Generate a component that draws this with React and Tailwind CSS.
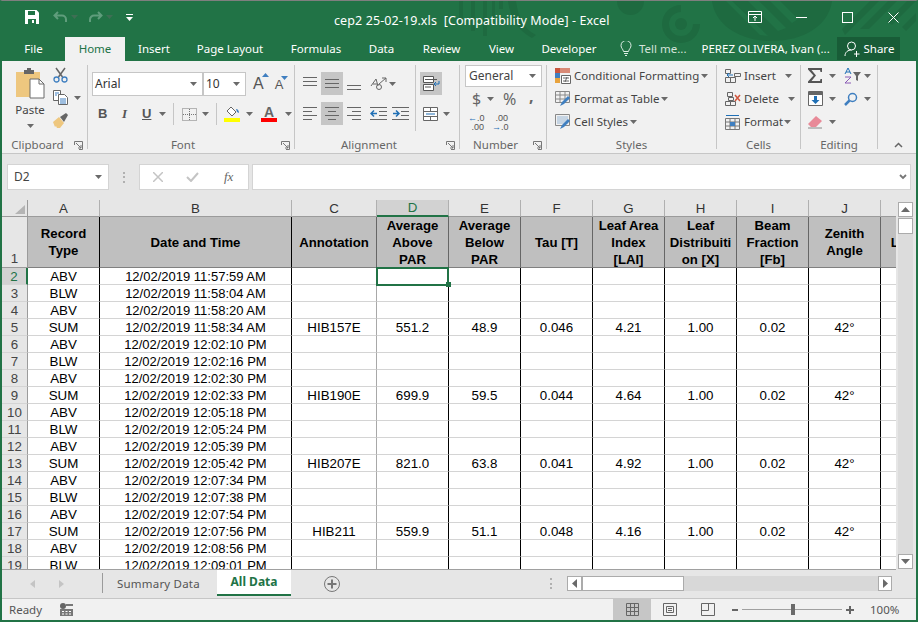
import React from 'react';

const rows = [
  ['ABV', '11:57:59 AM'],
  ['BLW', '11:58:04 AM'],
  ['ABV', '11:58:20 AM'],
  ['SUM', '11:58:34 AM', 'HIB157E', '551.2', '48.9', '0.046', '4.21'],
  ['ABV', '12:02:10 PM'],
  ['BLW', '12:02:16 PM'],
  ['ABV', '12:02:30 PM'],
  ['SUM', '12:02:33 PM', 'HIB190E', '699.9', '59.5', '0.044', '4.64'],
  ['ABV', '12:05:18 PM'],
  ['BLW', '12:05:24 PM'],
  ['ABV', '12:05:39 PM'],
  ['SUM', '12:05:42 PM', 'HIB207E', '821.0', '63.8', '0.041', '4.92'],
  ['ABV', '12:07:34 PM'],
  ['BLW', '12:07:38 PM'],
  ['ABV', '12:07:54 PM'],
  ['SUM', '12:07:56 PM', 'HIB211', '559.9', '51.1', '0.048', '4.16'],
  ['ABV', '12:08:56 PM'],
  ['BLW', '12:09:01 PM'],
];

const columns = ['A', 'B', 'C', 'D', 'E', 'F', 'G', 'H', 'I', 'J', 'K'];

const headers = [
  'Record\nType',
  'Date and Time',
  'Annotation',
  'Average\nAbove\nPAR',
  'Average\nBelow\nPAR',
  'Tau [T]',
  'Leaf Area\nIndex\n[LAI]',
  'Leaf\nDistribuiti\non [X]',
  'Beam\nFraction\n[Fb]',
  'Zenith\nAngle',
  'Latitude',
];

const Caret = ({ className = '' }) => (
  <svg width="7" height="4" viewBox="0 0 7 4" className={`shrink-0 ${className}`}>
    <path d="M0 0h7L3.5 4z" fill="#6a6a6a" />
  </svg>
);

const Launcher = () => (
  <svg width="9" height="9" viewBox="0 0 9 9" fill="none" stroke="#777" className="shrink-0">
    <path d="M.5 4V.5h8v8H5" />
    <path d="M2 2l5 5M7 4v3H4" />
  </svg>
);

const Lines = ({ widths, y = 0, gap = 4 }) => (
  <svg width="15" height="15" viewBox="0 0 15 15" stroke="#666" className="shrink-0">
    {widths.map((w, i) => (
      <path key={i} d={`M${w[0]} ${y + 0.5 + i * gap}H${w[1]}`} />
    ))}
  </svg>
);

const WindowPattern = () => (
  <svg className="absolute left-0 top-0 pointer-events-none" width="918" height="50" viewBox="0 0 918 50" fill="#1e6a40">
    <path d="M457 0h4v22h-4zM469 0h4v30h-4zM481 0h4v35h-4zM490 0h3v18h-3zM497 0h4v8h-4z" />
    <path d="M506 0h8c2 16 8 28 20 34l-4 3C516 30 508 16 506 0z" />
    <path d="M615 0h27c0 8-6 14-13.500 14S615 8 615 0z" />
    <path d="M679 4a19 19 0 1 0 19 19h-7a12 12 0 1 1-12-12z" />
    <circle cx="679" cy="23" r="6" />
    <path d="M710 0h120c-3 24-28 40-60 40S713 24 710 0zM724 0l34 34 8 1-36-35zM746 0l30 30 8-3-27-27zM768 0l22 22 6-4-18-18z" fillRule="evenodd" />
    <path d="M840 28L868 0h9l-34 34zM858 28l28-28h9l-28 28zM885 20L905 0h9l-24 24zM900 26l16-16v8l-12 12z" />
  </svg>
);

const TitleBar = () => (
  <div className="flex h-[36px] items-center pb-[4px] text-white">
    <svg width="16" height="16" viewBox="0 0 16 16" className="ml-[22px] shrink-0">
      <path d="M1 1h11.500L15 3.500V15H1z" fill="#fff" />
      <path d="M4 2h7v4H4z" fill="#217346" />
      <path d="M4 10h8v5H4z" fill="#217346" />
      <path d="M8 11h2v3H8z" fill="#fff" />
    </svg>
    <svg width="15" height="12" viewBox="0 0 15 12" fill="none" stroke="#5f9d7c" strokeWidth="2" className="ml-[13px] shrink-0">
      <path d="M5 1L1.500 4.500 5 8M2 4.500h7a4 4 0 0 1 4 4V11" />
    </svg>
    <Caret className="ml-[3px] opacity-40" />
    <svg width="15" height="12" viewBox="0 0 15 12" fill="none" stroke="#5f9d7c" strokeWidth="2" className="ml-[10px] shrink-0">
      <path d="M10 1l3.500 3.500L10 8M13 4.500H6a4 4 0 0 0-4 4V11" />
    </svg>
    <Caret className="ml-[3px] opacity-40" />
    <svg width="7" height="7" viewBox="0 0 7 7" className="ml-[13px] shrink-0" fill="#fff">
      <path d="M0 0h7v1H0zM0 3h7L3.500 7z" />
    </svg>
    <span className="ml-[201px] mt-[8px] w-[296px] whitespace-pre text-[12.500px] tracking-[0.1px]">cep2 25-02-19.xls  [Compatibility Mode] - Excel</span>
    <svg width="14" height="12" viewBox="0 0 14 12" fill="none" stroke="#fff" className="ml-[118px] shrink-0">
      <path d="M.5.500h13v11H.500zM.500 3.500h13M7 10V5M5 7l2-2 2 2" />
    </svg>
    <div className="ml-[34px] h-[1px] w-[11px] bg-white" />
    <div className="ml-[35px] h-[11px] w-[11px] border border-white" />
    <svg width="11" height="11" viewBox="0 0 11 11" stroke="#fff" className="ml-[35px] shrink-0">
      <path d="M.5.500l10 10M10.500.500l-10 10" />
    </svg>
  </div>
);

const tabs = [
  ['File', 'w-[63px]'],
  ['Home', 'w-[60px]'],
  ['Insert', 'w-[58px]'],
  ['Page Layout', 'w-[94px]'],
  ['Formulas', 'w-[78px]'],
  ['Data', 'w-[53px]'],
  ['Review', 'w-[67px]'],
  ['View', 'w-[53px]'],
  ['Developer', 'w-[82px]'],
];

const TabBar = () => (
  <div className="relative flex h-[24px] items-stretch text-[11.500px] text-white">
    {tabs.map(([name, w]) => (
      <div
        key={name}
        className={`${w} flex items-center justify-center ${name === 'Home' ? 'bg-[#f1f1f1] text-[#217346]' : ''}`}
      >
        {name}
      </div>
    ))}
    <svg width="12" height="15" viewBox="0 0 12 15" fill="none" stroke="#dfeee6" className="ml-[10px] mt-[4px] shrink-0">
      <path d="M3.500 10.500C3 8 1 7 1 4.500a5 5 0 0 1 10 0C11 7 9 8 8.500 10.500zM4 12.500h4M5 14.500h2" />
    </svg>
    <span className="ml-[7px] flex items-center text-[#d3e3da]">Tell me...</span>
    <span className="ml-[15px] flex w-[136px] items-center whitespace-nowrap">PEREZ OLIVERA, Ivan (...</span>
    <div className="flex h-[23px] w-[63px] items-center bg-[#185c37] pl-[7px]">
      <svg width="16" height="16" viewBox="0 0 16 16" fill="none" stroke="#fff" className="shrink-0">
        <circle cx="7.500" cy="5" r="4" />
        <path d="M1 15c0-4 3-6 6.500-6M10 13h5.500M12.500 10v6" />
      </svg>
      <span className="ml-[3px]">Share</span>
    </div>
  </div>
);

const RibbonGroup = ({ width, label, launcher, labelClass = '', children }) => (
  <div className={`${width} relative flex h-[84px] shrink-0 flex-col border-r border-[#c6c6c6]`}>
    <div className="-mt-[4px] h-[76px] shrink-0">{children}</div>
    <div className="mt-[4px] flex h-[8px] items-center justify-center text-[11.500px] text-[#666]">
      <span className={labelClass}>{label}</span>
    </div>
    {launcher && (
      <div className="absolute -bottom-[1px] right-[4px]">
        <Launcher />
      </div>
    )}
  </div>
);

const ClipboardGroup = () => (
  <RibbonGroup width="w-[86px]" label="Clipboard" launcher labelClass="mr-[14px]">
    <div className="flex pl-[12px] pt-[6px]">
      <div className="flex w-[32px] flex-col items-center">
        <svg width="30" height="32" viewBox="0 0 30 32" className="shrink-0">
          <path d="M1 5h24v25H1z" fill="#eec77f" />
          <path d="M9 3h3V1h4v2h3v4H9z" fill="#666" />
          <path d="M15 12h9l5 5v14H15z" fill="#fff" stroke="#6a6a6a" />
          <path d="M24 12v5h5" fill="none" stroke="#6a6a6a" />
        </svg>
        <span className="mt-[3px] text-[11.500px] leading-[16px] text-[#444]">Paste</span>
        <Caret className="mt-[6px]" />
      </div>
      <div className="ml-[7px] flex flex-col">
        <svg width="15" height="16" viewBox="0 0 15 16" fill="none" className="shrink-0">
          <path d="M3 1l6.500 9M12 1L5.500 10" stroke="#666" strokeWidth="1.500" />
          <circle cx="3.500" cy="12.500" r="2.500" stroke="#3f7fc0" strokeWidth="1.300" />
          <circle cx="11.500" cy="12.500" r="2.500" stroke="#3f7fc0" strokeWidth="1.300" />
        </svg>
        <div className="mt-[7px] flex items-center">
          <svg width="15" height="15" viewBox="0 0 15 15" fill="#fff" stroke="#666" className="shrink-0">
            <path d="M.5.500h7v10h-7z" />
            <path d="M5.500 4.500h6l3 3v7h-9z" />
            <path d="M2 3h4M2 5h2M7 9h6M7 11h6M7 13h6" stroke="#3f7fc0" />
          </svg>
          <Caret className="ml-[6px]" />
        </div>
        <svg width="16" height="16" viewBox="0 0 16 16" className="mt-[7px] shrink-0">
          <path d="M0 10l6-5 5 6-4 5H4l-1-2-1 1z" fill="#eec77f" />
          <path d="M7 5l6-4 2 2-4 7z" fill="#666" />
        </svg>
      </div>
    </div>
  </RibbonGroup>
);

const Combo = ({ width, text }) => (
  <div className={`${width} flex h-[24px] items-center justify-between border border-[#c6c6c6] bg-white pl-[2px] pr-[5px] font-['Noto_Sans',sans-serif] text-[12px] text-[#333]`}>
    <span>{text}</span>
    <Caret />
  </div>
);

const BigA = ({ size, up, className }) => (
  <span className={`relative flex items-center justify-center font-['Liberation_Sans',sans-serif] text-[#555] ${size} ${className}`}>
    A
    <svg width="7" height="4" viewBox="0 0 7 4" className="absolute -right-[5px] top-[1px]">
      <path d={up ? 'M0 4h7L3.500 0z' : 'M0 0h7L3.500 4z'} fill="#3f7fc0" />
    </svg>
  </span>
);

const FontGroup = () => (
  <RibbonGroup width="w-[207px]" label="Font" launcher labelClass="mr-[16px]">
    <div className="flex items-center pl-[4px] pt-[11px]">
      <Combo width="w-[111px]" text="Arial" />
      <Combo width="w-[43px]" text="10" />
      <BigA size="text-[16px]" up className="ml-[7px]" />
      <BigA size="text-[13px]" className="ml-[11px] mt-[2px]" />
    </div>
    <div className="mt-[7px] flex h-[22px] items-center pl-[10px] font-['Liberation_Sans',sans-serif] text-[13px] text-[#555]">
      <span className="w-[8px] font-bold">B</span>
      <span className="ml-[16px] w-[6px] font-['Liberation_Serif',serif] font-bold italic">I</span>
      <span className="ml-[14px] w-[9px] font-bold underline">U</span>
      <Caret className="ml-[8px]" />
      <div className="ml-[7px] h-[22px] w-[1px] bg-[#c6c6c6]" />
      <svg width="15" height="13" viewBox="0 0 15 13" fill="none" stroke="#777" strokeDasharray="1 1" className="ml-[8px] shrink-0">
        <path d="M.5.500h14v12H.500zM7.500 1v11M1 6.500h13" />
      </svg>
      <Caret className="ml-[5px]" />
      <div className="ml-[7px] h-[22px] w-[1px] bg-[#c6c6c6]" />
      <div className="ml-[7px] flex w-[16px] flex-col items-center">
        <svg width="15" height="12" viewBox="0 0 15 12" className="shrink-0">
          <path d="M6 1l5 5-4 4-5-5z" fill="#fff" stroke="#666" />
          <path d="M11 3c2 0 3 2 3 4l-2-1z" fill="#3f7fc0" />
        </svg>
        <div className="h-[4px] w-[16px] bg-[#ffff00]" />
      </div>
      <Caret className="ml-[6px]" />
      <div className="ml-[8px] flex w-[16px] flex-col items-center">
        <span className="h-[12px] text-[14px] font-bold leading-[13px] text-[#666]">A</span>
        <div className="h-[4px] w-[16px] bg-[#ff0000]" />
      </div>
      <Caret className="ml-[8px]" />
    </div>
  </RibbonGroup>
);

const AlignButton = ({ active, children, className = '' }) => (
  <div className={`flex h-[23px] w-[22px] shrink-0 items-center justify-center ${active ? 'bg-[#c6c6c6]' : ''} ${className}`}>
    {children}
  </div>
);

const full = [[0, 14], [0, 14], [0, 14]];

const AlignmentGroup = () => (
  <RibbonGroup width="w-[165px]" label="Alignment" launcher labelClass="mr-[16px]">
    <div className="flex h-full">
      <div className="mt-[4px] mb-[6px] w-[121px] border-r border-[#c6c6c6] pl-[4px] pt-[7px]">
        <div className="flex items-center">
          <AlignButton><Lines widths={full} y={1} /></AlignButton>
          <AlignButton active><Lines widths={full} y={3} /></AlignButton>
          <AlignButton><Lines widths={full.slice(0, 2)} y={9} /></AlignButton>
          <svg width="17" height="16" viewBox="0 0 17 16" fill="none" stroke="#666" className="ml-[5px] shrink-0">
            <path d="M1 10l5-7 2 7M3 8h4" />
            <circle cx="9" cy="11" r="2.500" />
            <path d="M9 8l7-6M16 2h-4M16 2v4" />
          </svg>
          <Caret className="ml-[2px]" />
        </div>
        <div className="mt-[7px] flex items-center">
          <AlignButton><Lines widths={[[0, 14], [0, 9], [0, 14], [0, 9]]} y={1} /></AlignButton>
          <AlignButton active><Lines widths={[[0, 14], [3, 11], [0, 14], [3, 11]]} y={1} /></AlignButton>
          <AlignButton><Lines widths={[[0, 14], [5, 14], [0, 14], [5, 14]]} y={1} /></AlignButton>
          <svg width="17" height="14" viewBox="0 0 17 14" fill="none" stroke="#666" className="ml-[5px] shrink-0">
            <path d="M0 .5h17M9 4.500h8M9 8.500h8M0 12.500h17" />
            <path d="M7 6.500H1M4 3.500l-3 3 3 3" stroke="#1f6fb5" strokeWidth="1.500" />
          </svg>
          <svg width="17" height="14" viewBox="0 0 17 14" fill="none" stroke="#666" className="ml-[5px] shrink-0">
            <path d="M0 .5h17M9 4.500h8M9 8.500h8M0 12.500h17" />
            <path d="M1 6.500h6M4 3.500l3 3-3 3" stroke="#1f6fb5" strokeWidth="1.500" />
          </svg>
        </div>
      </div>
      <div className="pl-[4px] pt-[11px]">
        <AlignButton active className="w-[22px]">
          <svg width="17" height="15" viewBox="0 0 17 15" fill="none" stroke="#555" className="shrink-0">
            <path d="M.5.500h10v6H.500zM.500 8.500h10v6H.500z" fill="#fff" />
            <path d="M2 3.500h12M2 11h6" />
            <path d="M16 5v3h-5M13 6l-2 2 2 2" stroke="#1f6fb5" />
          </svg>
        </AlignButton>
        <div className="mt-[7px] flex h-[23px] items-center pl-[3px]">
          <svg width="15" height="14" viewBox="0 0 15 14" fill="#fff" stroke="#666" className="shrink-0">
            <path d="M.5.500h14v13H.500z" />
            <path d="M1 4.500h13M1 9.500h13M7.500 1v3M7.500 10v3" />
            <path d="M3 7h9" stroke="#1f6fb5" />
          </svg>
          <Caret className="ml-[5px]" />
        </div>
      </div>
    </div>
  </RibbonGroup>
);

const NumberGroup = () => (
  <RibbonGroup width="w-[87px]" label="Number" launcher labelClass="mr-[15px]">
    <div className="pl-[5px] pt-[4px]">
      <div className="flex h-[22px] w-[77px] items-center justify-between border border-[#c6c6c6] bg-white pl-[3px] pr-[5px] text-[12px] text-[#444]">
        <span>General</span>
        <Caret />
      </div>
      <div className="mt-[1px] flex h-[22px] items-center text-[#666]">
        <span className="ml-[7px] w-[10px] text-[16px]">$</span>
        <Caret className="ml-[5px]" />
        <span className="ml-[9px] w-[14px] text-[16px]">%</span>
        <span className="ml-[12px] -mt-[6px] text-[16px] font-bold leading-[15px]">,</span>
      </div>
      <div className="mt-[3px] flex h-[20px] items-center font-['Liberation_Sans',sans-serif] text-[9px] leading-[9px] text-[#555]">
        <div className="ml-[3px] w-[16px] text-right">
          <div><span className="text-[#1f6fb5]">←</span>.0</div>
          <div>.00</div>
        </div>
        <div className="ml-[8px] w-[16px] text-right">
          <div>.00</div>
          <div><span className="text-[#1f6fb5]">→</span>.0</div>
        </div>
      </div>
    </div>
  </RibbonGroup>
);

const StyleRow = ({ icon, text }) => (
  <div className="flex h-[23px] items-center text-[11.500px] text-[#444]">
    {icon}
    <span className="ml-[3px] whitespace-nowrap">{text}</span>
    <Caret className="ml-[2px]" />
  </div>
);

const StylesGroup = () => (
  <RibbonGroup width="w-[170px]" label="Styles">
    <div className="pl-[8px] pt-[3px]">
      <StyleRow
        text="Conditional Formatting"
        icon={
          <svg width="16" height="16" viewBox="0 0 16 16" className="shrink-0">
            <path d="M0 0h5v5H0z" fill="#c8553d" />
            <path d="M5 0h10v5H5z" fill="#d98a76" />
            <path d="M0 5h5v5H0z" fill="#3f7fc0" />
            <path d="M0 10h5v5H0z" fill="#e8a33d" />
            <path d="M6.500 7.500h9v8h-9z" fill="#fff" stroke="#666" />
            <path d="M8 10h6M8 13h6M12 9l-2 5" stroke="#666" fill="none" />
          </svg>
        }
      />
      <StyleRow
        text="Format as Table"
        icon={
          <svg width="16" height="16" viewBox="0 0 16 16" fill="none" stroke="#888" className="shrink-0">
            <path d="M.5.500h14v11H.500zM1 4h13M5 1v10M10 1v10M1 8h13" />
            <path d="M5 15l2-4 6-6 2 2-6 6z" fill="#3f7fc0" stroke="none" />
          </svg>
        }
      />
      <StyleRow
        text="Cell Styles"
        icon={
          <svg width="16" height="16" viewBox="0 0 16 16" fill="none" stroke="#888" className="shrink-0">
            <path d="M.5.500h14v11H.500z" />
            <path d="M2 2h11v8H2z" fill="#c5d4e3" stroke="none" />
            <path d="M5 15l2-4 6-6 2 2-6 6z" fill="#3f7fc0" stroke="none" />
          </svg>
        }
      />
    </div>
  </RibbonGroup>
);

const CellRow = ({ icon, text, caretClass }) => (
  <div className="flex h-[23px] items-center text-[11.500px] text-[#444]">
    {icon}
    <span className="ml-[3px]">{text}</span>
    <Caret className={caretClass} />
  </div>
);

const CellsGroup = () => (
  <RibbonGroup width="w-[84px]" label="Cells">
    <div className="pl-[8px] pt-[3px]">
      <CellRow
        text="Insert"
        caretClass="ml-[9px]"
        icon={
          <svg width="16" height="16" viewBox="0 0 16 16" fill="none" stroke="#666" className="shrink-0">
            <path d="M.5 1.500h5v4h-5zM.500 9.500h5v5h-5zM5.500 9.500h5v5h-5zM9.500 5.500h6v3h-6z" />
            <path d="M8 7H2M4 5L2 7l2 2" stroke="#1f6fb5" />
          </svg>
        }
      />
      <CellRow
        text="Delete"
        caretClass="ml-[9px]"
        icon={
          <svg width="16" height="16" viewBox="0 0 16 16" fill="none" stroke="#666" className="shrink-0">
            <path d="M2.500 1.500h5v4h-5zM.500 10.500h5v4h-5zM5.500 10.500h5v4h-5zM3.500 6.500h5v3h-5z" />
            <path d="M10 4l5 6M15 4l-5 6" stroke="#d0553d" strokeWidth="1.500" />
          </svg>
        }
      />
      <CellRow
        text="Format"
        caretClass="ml-[1px]"
        icon={
          <svg width="16" height="16" viewBox="0 0 16 16" fill="none" stroke="#777" className="shrink-0">
            <path d="M.5 4.500h14v11H.500zM5 5v10M10 5v10M1 8h13M1 12h13" />
            <path d="M5 8h5v4H5z" fill="#3f7fc0" stroke="none" />
            <path d="M1 1.500h13" stroke="#1f6fb5" />
          </svg>
        }
      />
    </div>
  </RibbonGroup>
);

const EditingGroup = () => (
  <RibbonGroup width="w-[77px]" label="Editing">
    <div className="grid grid-cols-[36px_30px] pl-[7px] pt-[3px]">
      <div className="flex h-[23px] items-center">
        <svg width="15" height="15" viewBox="0 0 15 15" className="shrink-0">
          <path d="M0 0h14v4h-1.500L12 2H3.500L8 7.500 3.500 13H12l.5-2H14v4H0v-1.500L5.500 7.500 0 1.500z" fill="#555" />
        </svg>
        <Caret className="ml-[6px]" />
      </div>
      <div className="flex h-[23px] items-center">
        <svg width="17" height="16" viewBox="0 0 17 16" className="shrink-0">
          <path d="M9 4h8l-3 4v5l-2-1V8z" fill="#666" />
          <path d="M1 6l3-6 3 6M2 4h4" fill="none" stroke="#1f6fb5" />
          <path d="M1 9h6l-6 6h6" fill="none" stroke="#8a5bb5" />
        </svg>
        <Caret className="ml-[3px]" />
      </div>
      <div className="flex h-[23px] items-center">
        <svg width="15" height="15" viewBox="0 0 15 15" className="shrink-0">
          <path d="M.5.500h14v14H.500z" fill="#fff" stroke="#666" />
          <path d="M1 1h13v3H1z" fill="#666" />
          <path d="M6 5h3v4h2.500l-4 4-4-4H6z" fill="#1f6fb5" />
        </svg>
        <Caret className="ml-[6px]" />
      </div>
      <div className="flex h-[23px] items-center">
        <svg width="14" height="14" viewBox="0 0 14 14" fill="none" stroke="#3f7fc0" strokeWidth="1.500" className="shrink-0">
          <circle cx="8.500" cy="5.500" r="4" />
          <path d="M5.500 8.500L1 13" strokeWidth="2.500" />
        </svg>
        <Caret className="ml-[6px]" />
      </div>
      <div className="flex h-[23px] items-center">
        <svg width="15" height="14" viewBox="0 0 15 14" className="shrink-0">
          <path d="M0 9l8-8 6 5-6 6H3z" fill="#e88a98" />
          <path d="M0 13h14" stroke="#888" />
        </svg>
        <Caret className="ml-[6px]" />
      </div>
    </div>
  </RibbonGroup>
);

const Ribbon = () => (
  <div className="relative flex h-[92px] bg-[#f1f1f1] pt-[4px] font-['Noto_Sans',sans-serif]">
    <ClipboardGroup />
    <FontGroup />
    <AlignmentGroup />
    <NumberGroup />
    <StylesGroup />
    <CellsGroup />
    <EditingGroup />
    <svg width="9" height="6" viewBox="0 0 9 6" fill="none" stroke="#666" strokeWidth="1.500" className="absolute bottom-[5px] right-[13px]">
      <path d="M1 5l3.500-3.500L8 5" />
    </svg>
  </div>
);

const FormulaBar = () => (
  <div className="flex h-[47px] items-center border-t border-[#c6c6c6] bg-[#e6e6e6] py-[10px] pl-[5px]">
    <div className="flex h-[26px] w-[102px] items-center justify-between border border-[#d4d4d4] bg-white px-[6px] font-['Noto_Sans',sans-serif] text-[12px] text-[#444]">
      <span>D2</span>
      <Caret />
    </div>
    <div className="ml-[14px] flex h-[11px] w-[2px] flex-col justify-between">
      <div className="h-[2px] bg-[#b0b0b0]" />
      <div className="h-[2px] bg-[#b0b0b0]" />
      <div className="h-[2px] bg-[#b0b0b0]" />
    </div>
    <div className="ml-[14px] flex h-[26px] w-[110px] items-center border border-[#d4d4d4] bg-white">
      <svg width="10" height="10" viewBox="0 0 10 10" stroke="#c4c4c4" strokeWidth="1.500" className="ml-[13px] shrink-0">
        <path d="M0 0l10 10M10 0L0 10" />
      </svg>
      <svg width="13" height="10" viewBox="0 0 13 10" fill="none" stroke="#c4c4c4" strokeWidth="2" className="ml-[23px] shrink-0">
        <path d="M1 5l4 4 7-8" />
      </svg>
      <span className="ml-[25px] font-['Liberation_Serif',serif] text-[13px] italic text-[#666]">fx</span>
    </div>
    <div className="ml-[3px] flex h-[26px] w-[659px] items-center justify-end border border-[#d4d4d4] bg-white pr-[3px]">
      <svg width="8" height="6" viewBox="0 0 8 6" fill="none" stroke="#777" strokeWidth="1.800" className="shrink-0">
        <path d="M1 1l3 3 3-3" />
      </svg>
    </div>
  </div>
);

const cellBase = 'flex h-[17px] items-center justify-center border-b border-[#d4d4d4] pt-[1px] leading-[16px] whitespace-nowrap';

const DataRow = ({ index, row }) => {
  const [type, time, note = '', above = '', below = '', tau = '', lai = ''] = row;
  const sum = type === 'SUM';
  const values = [above, below, tau, lai, sum ? '1.00' : '', sum ? '0.02' : '', sum ? '42°' : ''];
  return (
    <>
      <div
        className={`${cellBase} border-[#b8b8b8] border-r text-[#444] ${
          index === 2 ? 'border-r-2 border-r-[#217346] bg-[#d2d2d2] text-[#217346]' : 'border-r-[#9b9b9b] bg-[#e6e6e6]'
        }`}
      >
        {index}
      </div>
      <div className={`${cellBase} border-r border-r-black bg-white`}>{type}</div>
      <div className={`${cellBase} border-r border-r-black bg-white text-[13px]`}>12/02/2019 {time}</div>
      <div className={`${cellBase} border-r border-r-[#a8a8a8] bg-white`}>{note}</div>
      {values.map((v, i) => (
        <div key={i} className={`${cellBase} border-r border-r-black bg-white`}>
          {v}
        </div>
      ))}
      <div className={`${cellBase} bg-white`} />
    </>
  );
};

const Sheet = () => (
  <div className="relative h-[370px] w-[894px] shrink-0 overflow-hidden border-b border-[#a0a0a0] font-['Liberation_Sans',Arial,sans-serif] text-[13.330px] text-black">
    <div className="grid w-[1040px] grid-cols-[26px_72px_192px_85px_72px_72px_72px_72px_72px_72px_72px_72px]">
      <div className="relative h-[17px] border-b border-r border-[#9b9b9b] bg-[#e6e6e6]">
        <svg width="10" height="9" viewBox="0 0 10 9" className="absolute bottom-[2px] right-[2px]">
          <path d="M10 0v9H0z" fill="#b4b4b4" />
        </svg>
      </div>
      {columns.map((c) => (
        <div
          key={c}
          className={`flex h-[17px] items-center justify-center border-r border-[#b0b0b0] pt-[1px] leading-[16px] ${
            c === 'D'
              ? 'border-b-2 border-b-[#217346] bg-[#d2d2d2] text-[#217346]'
              : 'border-b border-b-[#9b9b9b] bg-[#e6e6e6] text-[#333]'
          }`}
        >
          {c}
        </div>
      ))}

      <div className="flex h-[51px] items-end justify-center border-b border-r border-[#9b9b9b] bg-[#e6e6e6] leading-[16px] text-[#444]">1</div>
      {headers.map((h, i) => (
        <div
          key={h}
          className={`flex h-[51px] items-center justify-center whitespace-pre-line border-b border-r border-b-[#808080] bg-[#bfbfbf] text-center text-[13.200px] font-bold leading-[17px] ${
            i < 2 ? 'border-r-black' : 'border-r-[#666]'
          } ${i === 10 ? 'whitespace-nowrap' : ''}`}
        >
          {h}
        </div>
      ))}

      {rows.map((row, i) => (
        <DataRow key={i} index={i + 2} row={row} />
      ))}
    </div>
    {/* active cell outline */}
    <div className="absolute left-[374px] top-[67px] h-[19px] w-[73px] border-2 border-[#217346]" />
    <div className="absolute left-[444px] top-[82px] h-[5px] w-[5px] bg-[#217346]" />
  </div>
);

const ArrowBox = ({ dir, className = '' }) => {
  const paths = {
    up: 'M0 5h9L4.500 0z',
    down: 'M0 0h9L4.500 5z',
    left: 'M5 0v9L0 4.500z',
    right: 'M0 0v9l5-4.500z',
  };
  return (
    <div className={`flex shrink-0 items-center justify-center border border-[#ababab] bg-white ${className}`}>
      <svg width="9" height="9" viewBox="0 0 9 9" className="shrink-0">
        <path d={paths[dir]} fill="#6a6a6a" transform={dir === 'up' || dir === 'down' ? 'translate(0 2)' : 'translate(2 0)'} />
      </svg>
    </div>
  );
};

const VerticalScroll = () => (
  <div className="flex w-[20px] shrink-0 flex-col items-center bg-[#e6e6e6] pb-[1px] pl-[2px] pr-[3px] pt-[2px]">
    <ArrowBox dir="up" className="h-[15px] w-[15px]" />
    <div className="flex w-[15px] flex-1 flex-col bg-[#dcdcdc]">
      <div className="mt-[1px] h-[16px] w-[15px] border border-[#ababab] bg-white" />
    </div>
    <ArrowBox dir="down" className="h-[15px] w-[15px]" />
  </div>
);

const SheetTabs = () => (
  <div className="flex h-[29px] items-center border-b border-[#c6c6c6] bg-[#e6e6e6] pb-[1px] font-['Noto_Sans',sans-serif] text-[12px]">
    <svg width="5" height="8" viewBox="0 0 5 8" className="ml-[28px] shrink-0">
      <path d="M5 0v8L0 4z" fill="#c4c4c4" />
    </svg>
    <svg width="5" height="8" viewBox="0 0 5 8" className="ml-[24px] shrink-0">
      <path d="M0 0v8l5-4z" fill="#c4c4c4" />
    </svg>
    <div className="mb-[2px] ml-[38px] h-[20px] w-[1px] bg-[#9b9b9b]" />
    <div className="ml-[14px] w-[100px] whitespace-nowrap text-[11.500px] tracking-[0.2px] text-[#555]">Summary Data</div>
    <div className="flex h-[26px] w-[74px] -translate-y-[1px] items-center justify-center border-b-2 border-[#217346] bg-white font-bold text-[#217346]">
      All Data
    </div>
    <svg width="16" height="16" viewBox="0 0 16 16" fill="none" stroke="#777" className="ml-[33px] shrink-0">
      <circle cx="8" cy="8" r="7.500" />
      <path d="M8 3.500v9M3.500 8h9" strokeWidth="2" />
    </svg>
    <div className="ml-[210px] flex h-[11px] w-[2px] flex-col justify-between">
      <div className="h-[2px] bg-[#b0b0b0]" />
      <div className="h-[2px] bg-[#b0b0b0]" />
      <div className="h-[2px] bg-[#b0b0b0]" />
    </div>
    <div className="ml-[15px] flex h-[15px] w-[325px] items-stretch bg-[#d8d8d8]">
      <ArrowBox dir="left" className="w-[15px]" />
      <div className="w-[102px] border border-[#ababab] bg-white" />
      <div className="flex-1" />
      <ArrowBox dir="right" className="w-[14px]" />
    </div>
  </div>
);

const StatusBar = () => (
  <div className="flex h-[21px] items-center bg-[#f1f1f1] font-['Noto_Sans',sans-serif] text-[11.500px] text-[#555]">
    <span className="ml-[7px] w-[51px]">Ready</span>
    <svg width="13" height="13" viewBox="0 0 13 13" className="shrink-0">
      <circle cx="3" cy="3" r="3" fill="#666" />
      <path d="M6 1h7v2H6zM0 6h13v7H0z" fill="#777" />
      <path d="M2 8h2v1H2zM5.500 8h2v1h-2zM9 8h2v1H9zM2 10.500h2v1H2zM5.500 10.500h2v1h-2zM9 10.500h2v1H9z" fill="#fff" />
    </svg>
    <div className="ml-[540px] flex h-[21px] w-[38px] items-center justify-center bg-[#c6c6c6]">
      <svg width="13" height="13" viewBox="0 0 13 13" fill="none" stroke="#666">
        <path d="M.5.500h12v12H.500zM4.500 1v11M8.500 1v11M1 4.500h11M1 8.500h11" />
      </svg>
    </div>
    <svg width="14" height="13" viewBox="0 0 14 13" fill="none" stroke="#666" className="ml-[12px] shrink-0">
      <path d="M.5.500h13v12H.500zM3.500 3.500h7v6h-7zM5 5.500h4M5 7.500h4" />
    </svg>
    <svg width="14" height="13" viewBox="0 0 14 13" fill="none" stroke="#666" className="ml-[24px] shrink-0">
      <path d="M.5.500h13v12H.500zM1 7.500h6.500V1" />
    </svg>
    <div className="ml-[17px] h-[2px] w-[6px] bg-[#666]" />
    <div className="relative ml-[4px] flex h-[11px] w-[100px] items-center">
      <div className="h-[1px] w-full bg-[#a0a0a0]" />
      <div className="absolute left-[49px] top-0 h-[11px] w-[4px] bg-[#6a6a6a]" />
    </div>
    <svg width="8" height="8" viewBox="0 0 8 8" fill="#666" className="ml-[4px] shrink-0">
      <path d="M3 0h2v3h3v2H5v3H3V5H0V3h3z" />
    </svg>
    <span className="ml-[16px] whitespace-nowrap">100%</span>
  </div>
);

export default function App() {
  return (
    <div className="relative h-[622px] w-[918px] overflow-hidden border-x-2 border-b-2 border-t border-x-[#217346] border-b-[#217346] border-t-[#7f7f7f] bg-[#e6e6e6] font-['Noto_Sans',sans-serif]">
      <div className="relative bg-[#217346]">
        <WindowPattern />
        <div className="relative">
          <TitleBar />
          <TabBar />
        </div>
      </div>
      <Ribbon />
      <FormulaBar />
      <div className="flex">
        <Sheet />
        <VerticalScroll />
      </div>
      <SheetTabs />
      <StatusBar />
    </div>
  );
}
